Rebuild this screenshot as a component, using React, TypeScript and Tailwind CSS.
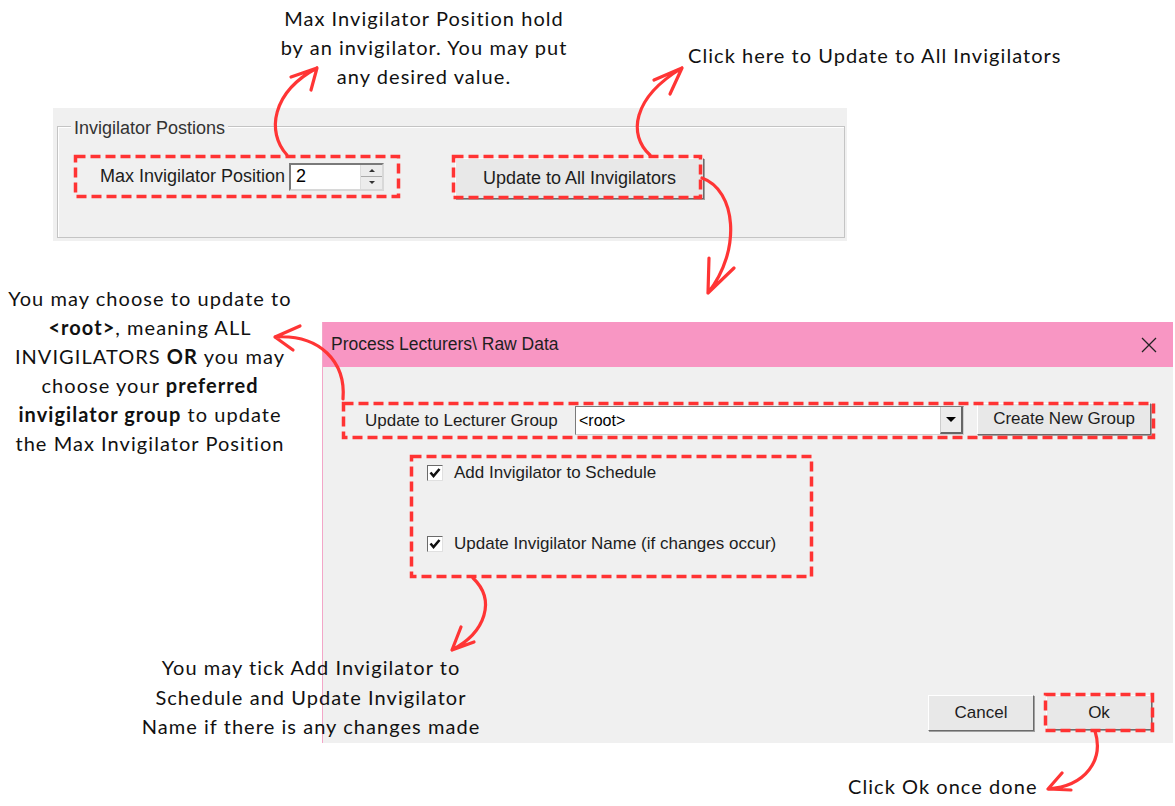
import { ReactNode } from "react";

const ui = { fontFamily: '"Liberation Sans", Arial, sans-serif' };
const note = { fontFamily: 'Lato, "Open Sans", sans-serif', letterSpacing: "1.05px" };

// red dashed frame drawn around a control
const Dashed = ({ className, children }: { className?: string; children?: ReactNode }) => (
  <div className={`relative ${className ?? ""}`}>
    <svg className="absolute inset-0 w-full h-full overflow-visible pointer-events-none z-10">
      <rect
        x="1.5"
        y="1.5"
        width="calc(100% - 3px)"
        height="calc(100% - 3px)"
        fill="none"
        stroke="#ff3333"
        strokeWidth="3.5"
        strokeDasharray="10 5"
      />
    </svg>
    {children}
  </div>
);

const WinButton = ({ children, className }: { children: ReactNode; className?: string }) => (
  <div
    className={`flex items-center justify-center bg-[#e8e8e8] border border-t-white border-l-white border-r-[#6b6b6b] border-b-[#6b6b6b] shadow-[1px_1px_0_#a0a0a0] text-[#1d1d1d] ${className ?? ""}`}
  >
    {children}
  </div>
);

const CheckRow = ({ label }: { label: string }) => (
  <div className="flex items-center gap-[11px] h-[20px]">
    <div className="w-[16px] h-[16px] bg-white border border-t-[#6b6b6b] border-l-[#6b6b6b] border-r-[#e0e0e0] border-b-[#e0e0e0] flex items-center justify-center">
      <svg viewBox="0 0 12 12" className="w-[12px] h-[12px]">
        <path d="M1.5 5.5 L4.5 9 L10.5 2" fill="none" stroke="#111" strokeWidth="2.6" />
      </svg>
    </div>
    <span className="text-[17px] text-[#1d1d1d]">{label}</span>
  </div>
);

export default function App() {
  return (
    <div className="relative w-[1175px] h-[806px] bg-white overflow-hidden">
      {/* top panel */}
      <div style={ui} className="absolute left-[53px] top-[108px] w-[794px] h-[133px] bg-[#f0f0f0] pt-[18px] pl-[4px] pr-[2px] pb-[3px]">
        <div className="relative h-full border border-[#c4c4c4] shadow-[inset_1px_1px_0_#fff]">
          <span className="absolute left-[13px] -top-[12px] px-[3px] bg-[#f0f0f0] text-[18px] text-[#333]">
            Invigilator Postions
          </span>
          <div className="flex items-start pl-[16px] pt-[28px] gap-[52px]">
            <Dashed className="w-[326px] h-[43px] flex items-center pl-[26px]">
              <span className="text-[18px] text-[#1d1d1d] mr-[4px] whitespace-nowrap">Max Invigilator Position</span>
              <div className="w-[95px] h-[28px] bg-white border-2 border-t-[#7a7a7a] border-l-[#7a7a7a] border-r-[#d8d8d8] border-b-[#d8d8d8] flex items-center">
                <span className="flex-1 pl-[5px] text-[18px] text-black">2</span>
                <div className="w-[22px] h-full flex flex-col border-l border-[#ddd]">
                  <div className="flex-1 bg-[#ececec] border-b border-[#aaa] flex items-center justify-center">
                    <div className="w-0 h-0 border-l-[3px] border-r-[3px] border-b-[3px] border-l-transparent border-r-transparent border-b-[#333]" />
                  </div>
                  <div className="flex-1 bg-[#ececec] flex items-center justify-center">
                    <div className="w-0 h-0 border-l-[3px] border-r-[3px] border-t-[3px] border-l-transparent border-r-transparent border-t-[#333]" />
                  </div>
                </div>
              </div>
            </Dashed>
            <Dashed className="w-[250px] h-[44px]">
              <WinButton className="absolute left-[3px] top-[3px] w-[249px] h-[41px] text-[18px]">Update to All Invigilators</WinButton>
            </Dashed>
          </div>
        </div>
      </div>

      {/* dialog */}
      <div style={ui} className="absolute left-[322px] top-[322px] w-[851px] h-[421px] flex flex-col border-l border-[#f3a6c8]">
        <div className="h-[45px] bg-[#f896c3] flex items-center justify-between pl-[8px] pr-[16px]">
          <span className="text-[17.5px] text-[#1f1f1f]">Process Lecturers\ Raw Data</span>
          <svg viewBox="0 0 16 16" className="w-[16px] h-[16px]">
            <path d="M1 1 L15 15 M15 1 L1 15" stroke="#222" strokeWidth="1.3" />
          </svg>
        </div>
        <div className="flex-1 bg-[#f0f0f0] flex flex-col pt-[35px]">
          <Dashed className="ml-[19px] w-[813px] h-[37px] flex items-center pl-[23px]">
            <span className="w-[210px] text-[17px] text-[#1d1d1d]">Update to Lecturer Group</span>
            <div className="w-[389px] h-[29px] bg-white border border-t-[#7a7a7a] border-l-[#7a7a7a] border-r-[#d0d0d0] border-b-[#d0d0d0] flex items-center">
              <span className="flex-1 pl-[3px] text-[16px] text-black">&lt;root&gt;</span>
              <div className="w-[23px] h-full bg-[#ececec] border-l border-[#ccc] border-r-2 border-b-2 border-r-[#666] border-b-[#666] flex items-center justify-center">
                <div className="w-0 h-0 border-l-[5px] border-r-[5px] border-t-[5px] border-l-transparent border-r-transparent border-t-black" />
              </div>
            </div>
            <WinButton className="ml-[13px] w-[174px] h-[32px] -mt-[3px] text-[17px]">Create New Group</WinButton>
          </Dashed>
          <Dashed className="ml-[87px] mt-[16px] w-[403px] h-[123px] flex flex-col pl-[17px] pt-[8px] gap-[51px]">
            <CheckRow label="Add Invigilator to Schedule" />
            <CheckRow label="Update Invigilator Name (if changes occur)" />
          </Dashed>
          <div className="flex-1" />
          <div className="flex justify-end items-center gap-[10px] pr-[19px] pb-[11px]">
            <WinButton className="w-[106px] h-[36px] text-[17px]">Cancel</WinButton>
            <Dashed className="w-[110px] h-[39px] flex items-center justify-center">
              <WinButton className="w-[106px] h-[35px] text-[17px]">Ok</WinButton>
            </Dashed>
          </div>
        </div>
      </div>

      {/* annotation texts */}
      <p style={note} className="absolute left-[244px] top-[4px] w-[360px] text-center text-[20px] leading-[29px] text-[#111]">
        Max Invigilator Position hold
        <br />
        by an invigilator. You may put
        <br />
        any desired value.
      </p>
      <p style={note} className="absolute left-[688px] top-[41px] text-[20px] leading-[29px] text-[#111] whitespace-nowrap">
        Click here to Update to All Invigilators
      </p>
      <p style={note} className="absolute -left-[10px] top-[284px] w-[320px] text-center text-[20px] leading-[29px] text-[#111]">
        You may choose to update to
        <br />
        <b>&lt;root&gt;</b>, meaning ALL
        <br />
        INVIGILATORS <b>OR</b> you may
        <br />
        choose your <b>preferred</b>
        <br />
        <b>invigilator group</b> to update
        <br />
        the Max Invigilator Position
      </p>
      <p style={note} className="absolute left-[111px] top-[653px] w-[400px] text-center text-[20px] leading-[29.5px] text-[#111]">
        You may tick Add Invigilator to
        <br />
        Schedule and Update Invigilator
        <br />
        Name if there is any changes made
      </p>
      <p style={note} className="absolute left-[848px] top-[772px] text-[20px] leading-[29px] text-[#111] whitespace-nowrap">
        Click Ok once done
      </p>

      {/* arrows */}
      <svg className="absolute inset-0 w-full h-full pointer-events-none" fill="none" stroke="#ff3535" strokeWidth="3.2" strokeLinecap="round" strokeLinejoin="round">
        <path d="M287 155 C 266 132, 272 92, 317 68 M317 68 L 291 77 M317 68 L 311 90" />
        <path d="M650 155 C 628 135, 632 98, 682 68 M682 68 L 654 80 M682 68 L 670 94" />
        <path d="M702 178 C 736 190, 742 250, 708 293 M708 293 L 709 258 M708 293 L 734 268" />
        <path d="M343 399 C 346 362, 320 334, 275 337 M275 337 L 300 326 M275 337 L 293 350" />
        <path d="M473 578 C 496 600, 486 632, 452 650 M452 650 L 461 627 M452 650 L 474 642" />
        <path d="M1095 731 C 1104 760, 1086 786, 1048 789 M1048 789 L 1062 773 M1048 789 L 1071 790" />
      </svg>
    </div>
  );
}
